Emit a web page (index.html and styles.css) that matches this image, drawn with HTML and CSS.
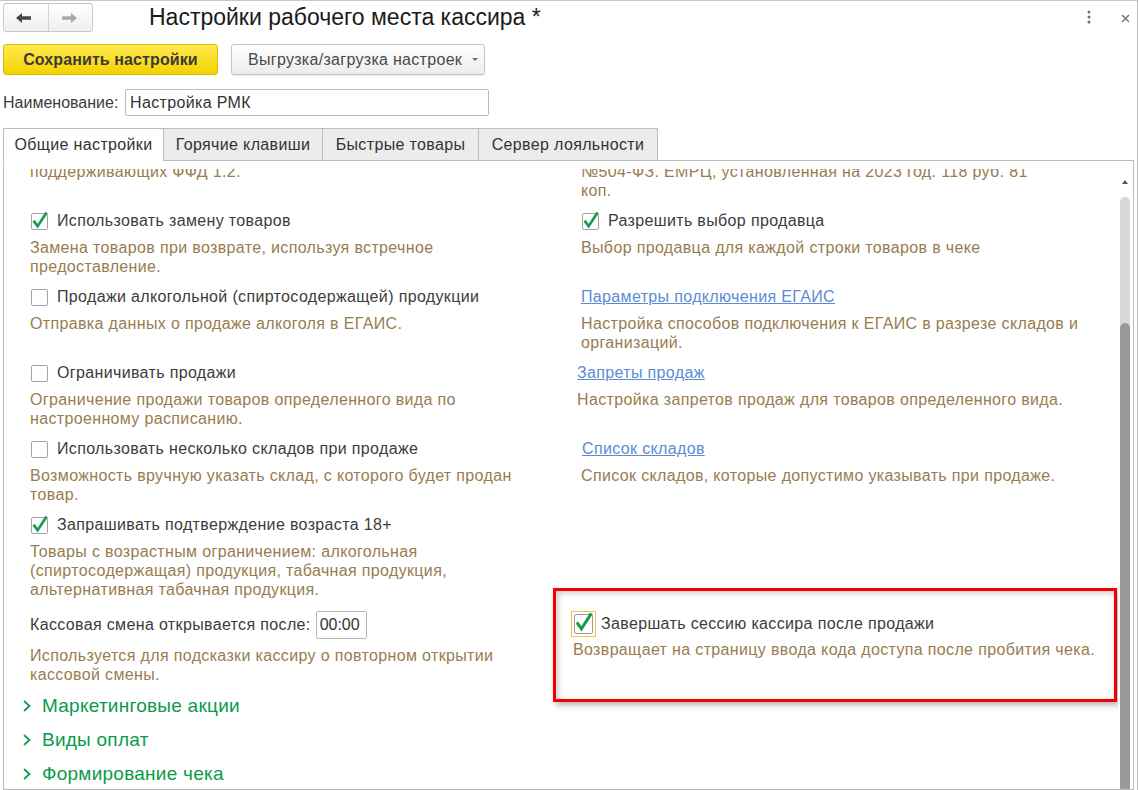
FILE: index.html
```html
<!DOCTYPE html>
<html lang="ru">
<head>
<meta charset="utf-8">
<title>Настройки рабочего места кассира</title>
<link rel="stylesheet" href="styles.css">
</head>
<body>
<div class="window">
  <header class="titlebar">
    <div class="nav">
      <button class="nav-btn back" aria-label="Назад">
        <svg width="16" height="10" viewBox="0 0 16 10"><path d="M0 5 L6 0 L6 3.3 L15 3.3 L15 6.7 L6 6.7 L6 10 Z" fill="#474747"/></svg>
      </button>
      <button class="nav-btn fwd" aria-label="Вперёд">
        <svg width="16" height="10" viewBox="0 0 16 10"><path d="M16 5 L10 0 L10 3.3 L1 3.3 L1 6.7 L10 6.7 L10 10 Z" fill="#a9a9a9"/></svg>
      </button>
    </div>
    <h1 class="title">Настройки рабочего места кассира *</h1>
    <div class="win-actions">
      <svg class="kebab" width="4" height="14" viewBox="0 0 4 14"><circle cx="2" cy="2" r="1.5" fill="#6f6f6f"/><circle cx="2" cy="7" r="1.5" fill="#6f6f6f"/><circle cx="2" cy="12" r="1.5" fill="#6f6f6f"/></svg>
      <svg class="close" width="9" height="9" viewBox="0 0 9 9"><path d="M1 1 L8 8 M8 1 L1 8" stroke="#7a7a7a" stroke-width="1.6"/></svg>
    </div>
  </header>

  <div class="commandbar">
    <button class="btn btn-primary">Сохранить настройки</button>
    <button class="btn btn-menu">Выгрузка/загрузка настроек<span class="caret"></span></button>
  </div>

  <div class="field-row">
    <span class="field-label">Наименование:</span>
    <div class="input">Настройка РМК</div>
  </div>

  <div class="tabs">
    <div class="tab tab-general active">Общие настройки</div>
    <div class="tab tab-hotkeys">Горячие клавиши</div>
    <div class="tab tab-quick">Быстрые товары</div>
    <div class="tab tab-loyalty">Сервер лояльности</div>
  </div>

  <div class="panel">
    <div class="scroll">
      <div class="content">
        <div class="grid">
          <div class="opt">
            <div class="desc nowrap">Обязательная проверка кодов маркировки на ККТ,<br>поддерживающих ФФД 1.2.</div>
          </div>
          <div class="opt">
            <div class="desc nowrap">Минимальная цена продажи табачной продукции<br>№504-ФЗ. ЕМРЦ, установленная на 2023 год. 118 руб. 81<br>коп.</div>
          </div>

          <div class="opt">
            <div class="opt-head"><span class="cb checked"><svg width="17" height="17" viewBox="0 0 17 17"><path d="M2.6 7.6 L6.6 13.2 L15.6 -0.6" /></svg></span><span class="label">Использовать замену товаров</span></div>
            <div class="desc">Замена товаров при возврате, используя встречное предоставление.</div>
          </div>
          <div class="opt">
            <div class="opt-head"><span class="cb checked"><svg width="17" height="17" viewBox="0 0 17 17"><path d="M2.6 7.6 L6.6 13.2 L15.6 -0.6" /></svg></span><span class="label">Разрешить выбор продавца</span></div>
            <div class="desc">Выбор продавца для каждой строки товаров в чеке</div>
          </div>

          <div class="opt">
            <div class="opt-head"><span class="cb"></span><span class="label">Продажи алкогольной (спиртосодержащей) продукции</span></div>
            <div class="desc">Отправка данных о продаже алкоголя в ЕГАИС.</div>
          </div>
          <div class="opt">
            <div class="opt-head"><a class="link" href="#">Параметры подключения ЕГАИС</a></div>
            <div class="desc">Настройка способов подключения к ЕГАИС в разрезе складов и организаций.</div>
          </div>

          <div class="opt">
            <div class="opt-head"><span class="cb"></span><span class="label">Ограничивать продажи</span></div>
            <div class="desc">Ограничение продажи товаров определенного вида по настроенному расписанию.</div>
          </div>
          <div class="opt nudge-left">
            <div class="opt-head"><a class="link" href="#">Запреты продаж</a></div>
            <div class="desc">Настройка запретов продаж для товаров определенного вида.</div>
          </div>

          <div class="opt">
            <div class="opt-head"><span class="cb"></span><span class="label">Использовать несколько складов при продаже</span></div>
            <div class="desc">Возможность вручную указать склад, с которого будет продан товар.</div>
          </div>
          <div class="opt">
            <div class="opt-head"><a class="link nudge-right" href="#">Список складов</a></div>
            <div class="desc">Список складов, которые допустимо указывать при продаже.</div>
          </div>

          <div class="opt">
            <div class="opt-head"><span class="cb checked"><svg width="17" height="17" viewBox="0 0 17 17"><path d="M2.6 7.6 L6.6 13.2 L15.6 -0.6" /></svg></span><span class="label">Запрашивать подтверждение возраста 18+</span></div>
            <div class="desc">Товары с возрастным ограничением: алкогольная (спиртосодержащая) продукция, табачная продукция, альтернативная табачная продукция.</div>
          </div>
          <div class="opt"></div>

          <div class="opt opt-time">
            <div class="opt-head"><span class="label">Кассовая смена открывается после:</span><span class="time-input">00:00</span></div>
            <div class="desc">Используется для подсказки кассиру о повторном открытии кассовой смены.</div>
          </div>
          <div class="opt">
            <div class="callout">
              <div class="opt-head callout-head"><span class="focus-ring"><span class="cb cb-lg checked"><svg width="19" height="19" viewBox="0 0 17 17"><path d="M2.6 7.6 L6.6 13.2 L15.6 -0.6" /></svg></span></span><span class="label">Завершать сессию кассира после продажи</span></div>
              <div class="desc callout-desc nowrap">Возвращает на страницу ввода кода доступа после пробития чека.</div>
            </div>
          </div>
        </div>

        <div class="groups">
          <div class="group"><svg class="chev" width="8" height="12" viewBox="0 0 8 12"><path d="M1 1 L6.5 6 L1 11" /></svg><span>Маркетинговые акции</span></div>
          <div class="group"><svg class="chev" width="8" height="12" viewBox="0 0 8 12"><path d="M1 1 L6.5 6 L1 11" /></svg><span>Виды оплат</span></div>
          <div class="group"><svg class="chev" width="8" height="12" viewBox="0 0 8 12"><path d="M1 1 L6.5 6 L1 11" /></svg><span>Формирование чека</span></div>
        </div>
      </div>
    </div>
    <div class="scrollbar">
      <div class="sb-arrow"></div>
      <div class="sb-track"><div class="sb-thumb"></div></div>
    </div>
  </div>
</div>
</body>
</html>
```

FILE: styles.css
```css
* { box-sizing: border-box; }

body {
  margin: 0;
  background: #fff;
  font-family: "Liberation Sans", Arial, sans-serif;
  font-size: 16px;
  letter-spacing: 0.35px;
  color: #3c3c3c;
}

.window {
  width: 1138px;
  height: 790px;
  border-top: 1px solid #c6c6c6;
  border-right: 1px solid #bdbdbd;
  overflow: hidden;
  background: #fff;
}

/* title bar */
.titlebar {
  height: 43px;
  padding: 2px 0 0 3px;
  display: flex;
  align-items: flex-start;
}

.nav {
  display: flex;
  width: 90px;
  height: 29px;
  border: 1px solid #c9c9c9;
  border-radius: 3px;
  background: linear-gradient(#ffffff, #efefef);
  overflow: hidden;
}

.nav-btn {
  width: 45px;
  height: 100%;
  padding: 0;
  border: 0;
  background: transparent;
  display: flex;
  align-items: center;
  justify-content: center;
}

.nav-btn.back { border-right: 1px solid #d4d4d4; width: 46px; }
.nav-btn svg { display: block; }
.nav-btn.back svg { margin-left: -4px; }
.nav-btn.fwd svg { margin-left: -2px; }

.title {
  margin: 0 0 0 56px;
  font-size: 23px;
  font-weight: normal;
  letter-spacing: 0;
  line-height: 28px;
  color: #1b1b1b;
}

.win-actions {
  margin-left: auto;
  display: flex;
  align-items: flex-start;
  padding-top: 7px;
}

.kebab { margin-right: 30px; }
.close { margin-top: 4px; margin-right: 7px; }

/* command bar */
.commandbar {
  display: flex;
  gap: 13px;
  padding-left: 3px;
  height: 31px;
}

.btn {
  height: 31px;
  border-radius: 3px;
  font-family: inherit;
  font-size: 16px;
  letter-spacing: 0.3px;
  padding: 0;
  cursor: default;
}

.btn-primary {
  width: 215px;
  background: linear-gradient(#ffea4f, #f4d200);
  border: 1px solid #d9bb00;
  font-weight: bold;
  letter-spacing: 0.1px;
  color: #3a3a3a;
}

.btn-menu {
  width: 254px;
  background: linear-gradient(#ffffff, #ececec);
  border: 1px solid #c4c4c4;
  color: #4a4a4a;
  box-shadow: 0 1px 1px rgba(0, 0, 0, 0.08);
  display: flex;
  align-items: center;
  padding-left: 16px;
}

.caret {
  margin-left: 10px;
  width: 0;
  height: 0;
  border-left: 3px solid transparent;
  border-right: 3px solid transparent;
  border-top: 3px solid #6a6a6a;
}

/* name field */
.field-row {
  margin-top: 14px;
  display: flex;
  align-items: center;
  padding-left: 3px;
}

.field-label {
  width: 122px;
  flex: none;
  letter-spacing: 0;
}

.input {
  width: 364px;
  height: 27px;
  border: 1px solid #bcbcbc;
  border-radius: 2px;
  padding-left: 4px;
  line-height: 25px;
  color: #333;
}

/* tabs */
.tabs {
  margin-top: 12px;
  display: flex;
  padding-left: 3px;
  position: relative;
  z-index: 1;
  margin-bottom: -1px;
}

.tab {
  height: 33px;
  padding: 0;
  border: 1px solid #bcbcbc;
  background: #ececec;
  line-height: 31px;
  text-align: center;
  color: #333;
  white-space: nowrap;
}

.tab + .tab { margin-left: -1px; }

.tab-general { width: 161px; }
.tab-hotkeys { width: 160px; }
.tab-quick { width: 157px; }
.tab-loyalty { width: 180px; }

.tab.active {
  background: #fff;
  border-bottom-color: #fff;
}

/* panel */
.panel {
  margin: 0 3px;
  height: 630px;
  border: 1px solid #bcbcbc;
  display: flex;
}

.scroll {
  flex: 1;
  margin-top: 8px;
  overflow: hidden;
}

.content {
  margin-top: -29px;
  padding-left: 26px;
}

.grid {
  display: grid;
  grid-template-columns: 505px 1fr;
  column-gap: 46px;
  row-gap: 7px;
}

.opt-head {
  display: flex;
  align-items: center;
  height: 28px;
  white-space: nowrap;
}

.cb {
  position: relative;
  width: 17px;
  height: 17px;
  margin-left: 1px;
  margin-right: 9px;
  border: 1px solid #a3a3a3;
  border-radius: 2px;
  background: #fff;
  flex: none;
}

.cb svg {
  position: absolute;
  left: -1px;
  top: -1px;
  overflow: visible;
}

.cb svg path {
  fill: none;
  stroke: #169c4c;
  stroke-width: 2.7;
}

.desc {
  margin-top: 3px;
  line-height: 19px;
  color: #977d4f;
}

.nowrap { white-space: nowrap; }

.link {
  color: #5b8bd5;
  text-decoration: underline;
}

.nudge-left { margin-left: -4px; }
.nudge-right { margin-left: 1px; }

.opt-time { margin-top: 5px; }
.opt-time .desc { margin-top: 7px; }

.time-input {
  margin-left: 5px;
  width: 51px;
  height: 28px;
  border: 1px solid #b5b5b5;
  border-radius: 2px;
  line-height: 26px;
  padding-left: 3px;
  letter-spacing: 0;
  color: #333;
}

/* highlighted callout */
.callout {
  width: 564px;
  height: 114px;
  margin: -18px 0 -30px -28px;
  border: 3px solid #f00000;
  padding: 19px 15px 0;
  box-shadow: 3px 3px 6px rgba(0, 0, 0, 0.3), inset 2px 2px 6px rgba(0, 0, 0, 0.22);
  background: #fff;
}

.focus-ring {
  width: 25px;
  height: 26px;
  border: 1px solid #f2c24a;
  display: flex;
  align-items: center;
  justify-content: center;
  margin-right: 5px;
  flex: none;
}

.cb.cb-lg {
  width: 19px;
  height: 20px;
  margin: 0;
  border-color: #9b9b9b;
}

.callout-desc { margin-top: 2px; margin-left: 2px; }

/* collapsible groups */
.groups {
  margin-top: 5px;
  margin-left: -7px;
}

.group {
  height: 34px;
  display: flex;
  align-items: center;
  font-size: 19px;
  letter-spacing: 0.25px;
  color: #0b9a4b;
}

.chev { margin-right: 11px; }
.chev path {
  fill: none;
  stroke: #0b9a4b;
  stroke-width: 1.7;
}

/* scrollbar */
.scrollbar {
  width: 10px;
  margin: 19px 3px 0 2px;
  display: flex;
  flex-direction: column;
}

.sb-arrow {
  align-self: center;
  width: 0;
  height: 0;
  border-left: 3px solid transparent;
  border-right: 3px solid transparent;
  border-bottom: 4px solid #555;
}

.sb-track {
  margin-top: 13px;
  flex: 1;
  background: #d8d8d8;
  border-radius: 5px 5px 0 0;
  display: flex;
  flex-direction: column;
  justify-content: flex-end;
}

.sb-thumb {
  height: 466px;
  background: #9a9a9a;
  border-radius: 5px 5px 0 0;
}
```
